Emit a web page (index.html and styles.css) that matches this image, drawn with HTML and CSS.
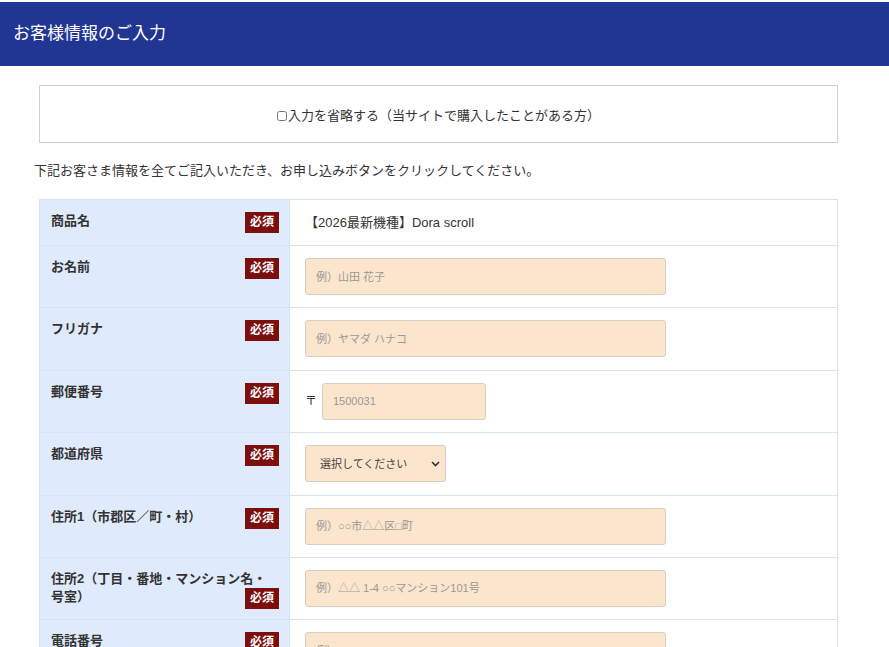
FILE: index.html
```html
<!DOCTYPE html>
<html lang="ja">
<head>
  <meta charset="UTF-8" />
  <title>お客様情報のご入力</title>
  <link rel="stylesheet" href="styles.css">
</head>
<body>
  <h1 class="page-title">お客様情報のご入力</h1>

  <div class="main">
    <div class="skip-box">
      <label><input type="checkbox" class="skip-check" />入力を省略する（当サイトで購入したことがある方）</label>
    </div>

    <p class="lead">下記お客さま情報を全てご記入いただき、お申し込みボタンをクリックしてください。</p>

    <table class="form-table">
      <tr>
        <th>商品名<span class="req">必須</span></th>
        <td class="product">【2026最新機種】Dora scroll</td>
      </tr>
      <tr>
        <th>お名前<span class="req">必須</span></th>
        <td><input class="field" placeholder="例）山田 花子" /></td>
      </tr>
      <tr>
        <th>フリガナ<span class="req">必須</span></th>
        <td><input class="field" placeholder="例）ヤマダ ハナコ" /></td>
      </tr>
      <tr>
        <th>郵便番号<span class="req">必須</span></th>
        <td>
          <span class="zip-mark">〒</span><input class="field zip" placeholder="1500031" />
        </td>
      </tr>
      <tr>
        <th>都道府県<span class="req">必須</span></th>
        <td>
          <div class="select-wrap">
            <select class="field pref">
              <option>選択してください</option>
              <option>北海道</option>
              <option>東京都</option>
            </select>
            <svg class="chevron" width="9" height="6" viewBox="0 0 9 6"><path d="M1 1l3.5 3.5L8 1" fill="none" stroke="#333" stroke-width="1.6"/></svg>
          </div>
        </td>
      </tr>
      <tr>
        <th>住所1（市郡区／町・村）<span class="req">必須</span></th>
        <td><input class="field" placeholder="例）○○市△△区□町" /></td>
      </tr>
      <tr>
        <th>住所2（丁目・番地・マンション名・号室）<span class="req">必須</span></th>
        <td><input class="field" placeholder="例）△△ 1-4 ○○マンション101号" /></td>
      </tr>
      <tr>
        <th>電話番号<span class="req">必須</span></th>
        <td><input class="field" placeholder="例）0000000000" /></td>
      </tr>
      <tr>
        <th>メールアドレス<span class="req">必須</span></th>
        <td><input class="field" placeholder="例）info@example.com" /></td>
      </tr>
    </table>
  </div>
</body>
</html>
```

FILE: styles.css
```css
body {
  margin: 0;
  padding-top: 2px;
  font-family: "Liberation Sans", "Noto Sans CJK JP", sans-serif;
  font-size: 13px;
  color: #333;
  background: #fff;
}
.page-title {
  margin: 0;
  height: 64px;
  line-height: 64px;
  padding-left: 13px;
  background: #213593;
  color: #fff;
  font-size: 17px;
  font-weight: normal;
}
.main {
  margin-left: 34px;
  width: 810px;
  padding-top: 19px;
}
.skip-box {
  margin-left: 5px;
  width: 799px;
  height: 58px;
  box-sizing: border-box;
  border: 1px solid #d0d0d0;
  display: flex;
  align-items: center;
  justify-content: center;
  font-size: 13px;
}
.skip-check {
  width: 10px;
  height: 10px;
  margin: 0 1px 0 0;
  vertical-align: -1px;
}
.lead {
  margin: 18px 0 19px 0;
  line-height: 19px;
}
.form-table {
  margin-left: 5px;
  width: 799px;
  border-collapse: collapse;
}
.form-table th,
.form-table td {
  border: 1px solid #d9e3f0;
  vertical-align: top;
  text-align: left;
}
.form-table th {
  width: 250px;
  box-sizing: border-box;
  padding: 12px 10px 10px 11px;
  background: #dfebfc;
  font-weight: bold;
  font-size: 13px;
  line-height: 18px;
}
.form-table td {
  padding: 12px 15px 12.4px 15px;
  line-height: 19px;
}
.form-table td.product {
  padding: 13px 15px 13px 15px;
  color: #333;
}
.req {
  float: right;
  background: #7d0e0e;
  color: #fff;
  font-size: 12px;
  line-height: 21px;
  height: 21px;
  padding: 0 5px;
}
.field {
  width: 361px;
  height: 37px;
  box-sizing: border-box;
  padding: 0 10px;
  background: #fce5cd;
  border: 1px solid #d6cdc3;
  border-radius: 3px;
  font-family: "Liberation Sans", "Noto Sans CJK JP", sans-serif;
  font-size: 11px;
  color: #333;
  vertical-align: top;
}
.field::placeholder {
  color: #999;
}
.zip-mark {
  display: inline-block;
  width: 17px;
  line-height: 37px;
  font-size: 12px;
}
.zip {
  width: 164px;
}
.select-wrap {
  position: relative;
  display: inline-block;
}
.pref {
  width: 141px;
  appearance: none;
  -webkit-appearance: none;
  padding-left: 14px;
  color: #444;
}
.chevron {
  position: absolute;
  right: 6px;
  top: 16px;
  pointer-events: none;
}
```
